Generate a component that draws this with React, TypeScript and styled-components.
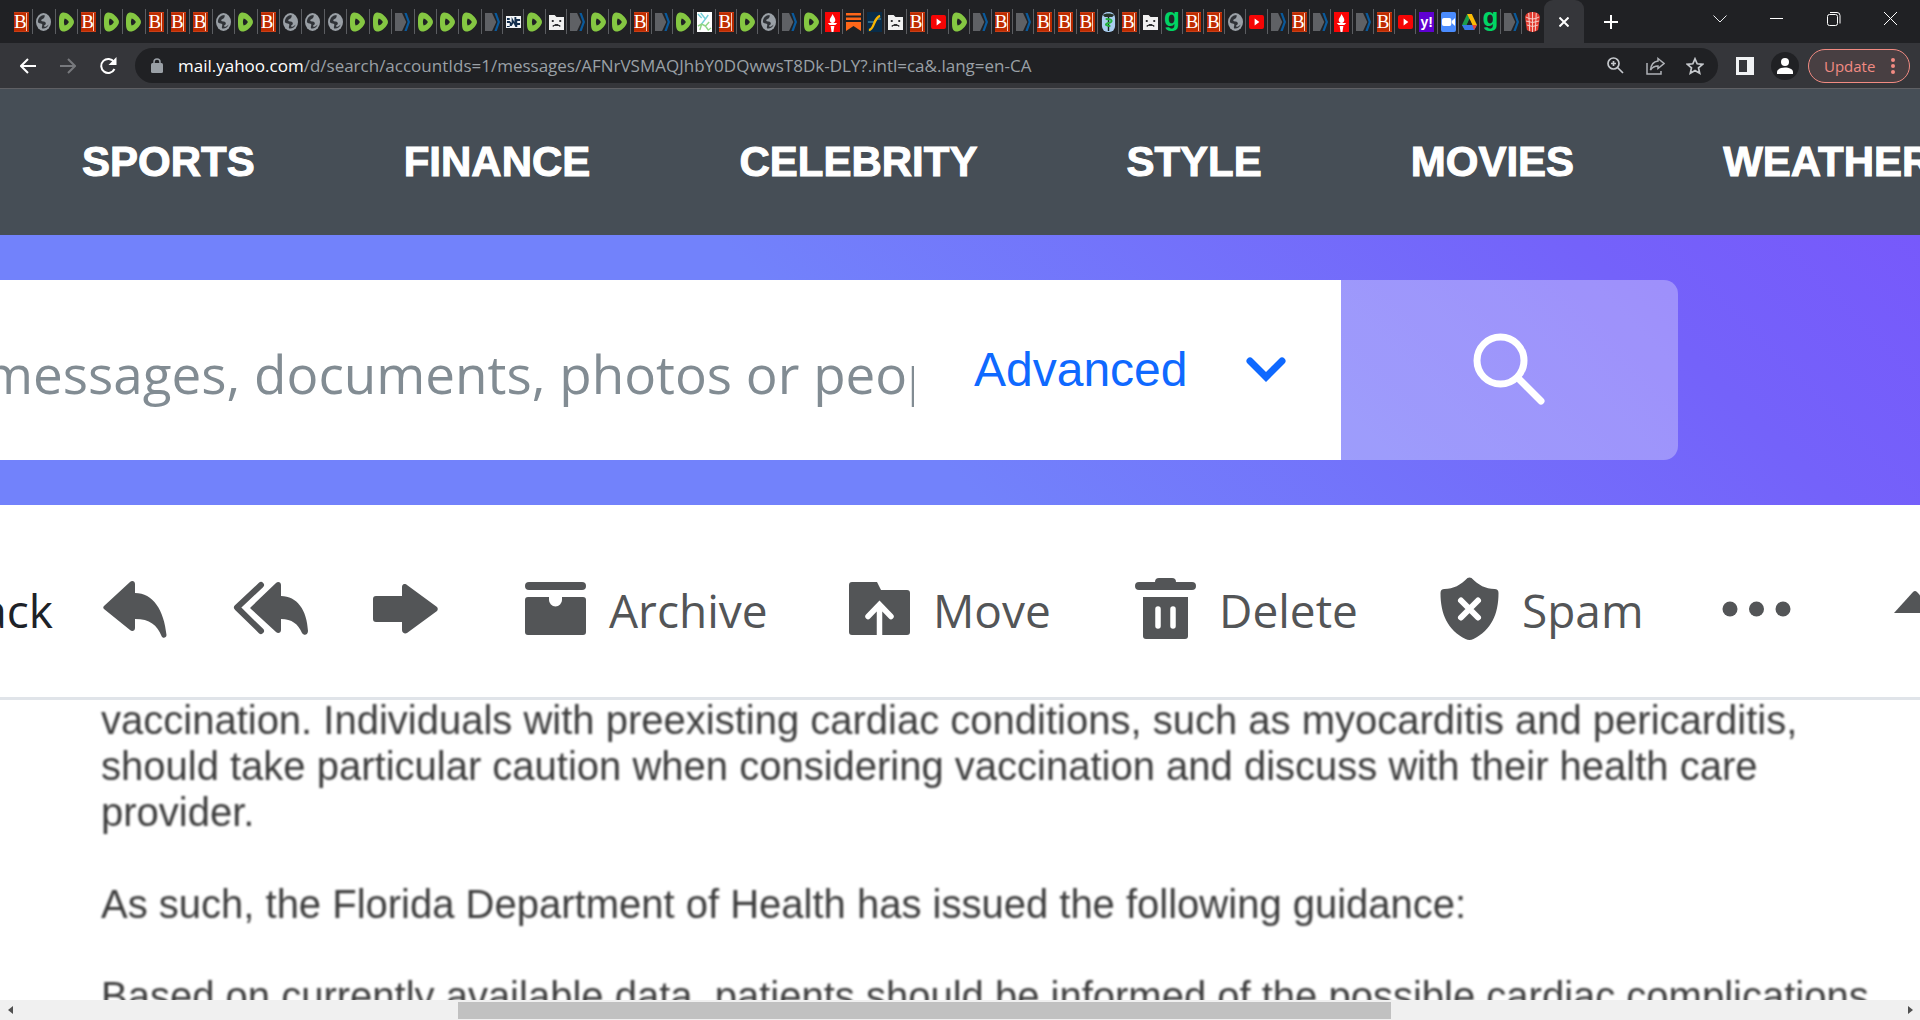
import React from "react";
import styled, { createGlobalStyle, css } from "styled-components";

const GlobalStyle = createGlobalStyle`
  * { box-sizing: border-box; }
  html, body, #root { height: 100%; }
  body { margin: 0; overflow: hidden; background: #fff; }
  button { border: 0; padding: 0; margin: 0; background: none; font: inherit; color: inherit; cursor: pointer; }
  svg { display: block; flex: none; }
  a { color: inherit; text-decoration: none; }
`;

const uiFont = `"Open Sans", "Noto Sans", sans-serif`;
const pageFont = `"Liberation Sans", Arial, sans-serif`;

const Window = styled.div`
  display: flex;
  flex-direction: column;
  height: 100vh;
  overflow: hidden;
  font-family: ${uiFont};
`;

/* ---------- tab strip ---------- */

const TabStrip = styled.div`
  display: flex;
  flex: none;
  height: 43px;
  padding-left: 11px;
  background: #202124;
`;

const TabGroup = styled.div<{ $width: number }>`
  display: flex;
  flex: 0 1 ${(p) => p.$width}px;
  min-width: 0;
`;

const Tab = styled.button<{ $last: boolean }>`
  display: flex;
  align-items: center;
  flex: 1 1 0;
  min-width: 0;
  height: 25px;
  margin-top: 9px;
  padding-left: 3px;
  border-right: 1px solid ${(p) => (p.$last ? "transparent" : "#5b5d61")};
`;

const LetterIcon = styled.span<{ $bg: string; $fg: string; $serif?: boolean; $size: number; $lift?: number }>`
  display: flex;
  align-items: center;
  justify-content: center;
  flex: none;
  width: 15px;
  height: 20px;
  padding-bottom: ${(p) => p.$lift ?? 0}px;
  background: ${(p) => p.$bg};
  color: ${(p) => p.$fg};
  font-family: ${(p) => (p.$serif ? `"Liberation Serif", serif` : pageFont)};
  font-size: ${(p) => p.$size}px;
  font-weight: 700;
  line-height: 20px;
  ${(p) =>
    p.$serif &&
    css`
      border: solid #c93f18;
      border-width: 1px 0;
      box-shadow: inset -2px 0 #b92a00, inset -3px 0 #f3c9bd;
      justify-content: flex-start;
      font-weight: 400;
    `}
`;

const ActiveTab = styled.div`
  display: flex;
  align-items: center;
  justify-content: center;
  flex: none;
  width: 40px;
  height: 43px;
  border-radius: 9px 9px 0 0;
  background: #35363a;
`;

const NewTab = styled.button`
  display: flex;
  align-items: center;
  justify-content: center;
  width: 54px;
`;

const WindowControls = styled.div`
  display: flex;
  flex: none;
  margin-left: auto;
  padding-right: 1px;
`;

const WindowButton = styled.button`
  display: flex;
  align-items: center;
  justify-content: center;
  width: 57px;
  height: 37px;
`;

/* ---------- address bar ---------- */

const BrowserBar = styled.div`
  display: flex;
  align-items: center;
  flex: none;
  height: 46px;
  padding: 0 10px 0 8px;
  border-bottom: 1px solid #5f6064;
  background: #35363a;
`;

const NavButton = styled.button`
  display: flex;
  align-items: center;
  justify-content: center;
  flex: none;
  width: 40px;
  height: 36px;
`;

const Omnibox = styled.div`
  display: flex;
  align-items: center;
  flex: 1;
  min-width: 0;
  height: 35px;
  margin-left: 7px;
  padding: 0 13px 0 16px;
  border-radius: 18px;
  background: #202124;
`;

const Url = styled.div`
  flex: 1;
  min-width: 0;
  margin-left: 15px;
  overflow: hidden;
  color: #9aa0a6;
  font-size: 17px;
  line-height: 24px;
  white-space: nowrap;
  & > strong { color: #fff; font-weight: 400; }
`;

const OmniActions = styled.div`
  display: flex;
  gap: 20px;
`;

const BarIcon = styled.button`
  display: flex;
  align-items: center;
  justify-content: center;
  flex: none;
  width: 20px;
  height: 20px;
`;

const SidePanel = styled(BarIcon)`
  margin-left: 17px;
`;

const Avatar = styled.button`
  display: flex;
  align-items: center;
  justify-content: center;
  flex: none;
  width: 28px;
  height: 28px;
  margin: 0 9px 0 16px;
  border-radius: 50%;
  background: #202124;
`;

const Update = styled.button`
  display: flex;
  align-items: center;
  justify-content: space-between;
  flex: none;
  width: 102px;
  height: 34px;
  padding: 0 14px 0 15px;
  border: 1px solid #f28b82;
  border-radius: 17px;
  background: #483f42;
  color: #f28b82;
  font-size: 15px;
  line-height: 20px;
`;

/* ---------- portal navigation ---------- */

const PortalNav = styled.nav`
  display: flex;
  align-items: center;
  flex: none;
  gap: 149px;
  height: 146px;
  padding-left: 82px;
  overflow: hidden;
  background: #464e56;
  color: #fff;
  font-family: ${pageFont};
  font-size: 42px;
  font-weight: 700;
  line-height: 46px;
  -webkit-text-stroke: 1px #fff;
`;

/* ---------- search ---------- */

const SearchBand = styled.div`
  flex: none;
  padding: 45px 242px 45px 0;
  background: linear-gradient(45deg, #7282fb 45%, #7462fa 84%, #7759fb 100%);
`;

const SearchForm = styled.form`
  display: flex;
  height: 180px;
  border-radius: 0 14px 14px 0;
  overflow: hidden;
`;

const SearchBox = styled.div`
  display: flex;
  align-items: center;
  flex: 1;
  min-width: 0;
  background: #fff;
`;

const SearchInput = styled.input`
  flex: 1;
  min-width: 0;
  height: 80px;
  margin: 8px 0 0 -16px;
  padding: 0;
  border: 0;
  outline: 0;
  background: none;
  color: #1d2228;
  font-family: ${uiFont};
  font-size: 53px;
  line-height: 80px;
  &::placeholder { color: #828c93; opacity: 1; }
`;

const Advanced = styled.button`
  display: flex;
  align-items: center;
  flex: none;
  gap: 58px;
  width: 367px;
  margin-left: 60px;
  color: #0f69ff;
  font-family: ${pageFont};
  font-size: 48px;
  line-height: 56px;
`;

const SearchButton = styled.button`
  display: flex;
  align-items: center;
  justify-content: center;
  flex: none;
  width: 337px;
  padding: 0 2px 2px 0;
  background: rgba(255, 255, 255, 0.3);
`;

/* ---------- message toolbar ---------- */

const MailToolbar = styled.div`
  display: flex;
  align-items: center;
  flex: none;
  height: 195px;
  padding-top: 16px;
  overflow: hidden;
  border-bottom: 3px solid #e0e4e9;
  background: #fff;
  color: #535557;
  font-size: 46px;
  line-height: 64px;
`;

const Back = styled.button`
  display: flex;
  justify-content: flex-end;
  flex: none;
  width: 53px;
  color: #1d2228;
`;

const ToolLabel = styled.span`
  padding-top: 2px;
`;

const ToolButton = styled.button<{ $width: number; $before?: number }>`
  display: flex;
  align-items: center;
  flex: none;
  gap: 23px;
  width: ${(p) => p.$width}px;
  margin-left: ${(p) => p.$before ?? 0}px;
`;

/* ---------- message ---------- */

const Article = styled.main`
  flex: 1;
  min-height: 0;
  overflow: hidden;
`;

/* The message is scrolled, so its first line sits tight under the toolbar. */
const ArticleBody = styled.div`
  margin-top: -3px;
  padding: 0 40px 0 101px;
  color: #3c3c3c;
  font-family: ${pageFont};
  font-size: 40px;
  line-height: 46px;
  filter: blur(1px);
`;

const Paragraph = styled.p`
  margin: 0 0 46px;
  white-space: nowrap;
`;

/* ---------- scroll bar ---------- */

const ScrollBar = styled.div`
  display: flex;
  flex: none;
  height: 20px;
  background: #f0f0f0;
`;

const ScrollArrow = styled.button`
  display: flex;
  align-items: center;
  justify-content: center;
  flex: none;
  width: 20px;
  height: 20px;
`;

const ScrollTrack = styled.div`
  flex: 1;
  padding: 2px 0 1px;
`;

const ScrollThumb = styled.div`
  width: 49.6%;
  height: 17px;
  margin-left: 23.3%;
  background: #c1c1c1;
`;

/* ---------- favicons ---------- */

const Fav = ({ children }: { children: React.ReactNode }) => (
  <svg width="15" height="20" viewBox="0 0 16 20" preserveAspectRatio="none" aria-hidden="true">
    {children}
  </svg>
);

const favicons: Record<string, { title: string; icon: React.ReactNode }> = {
  B: { title: "News", icon: <LetterIcon $bg="#bf2c00" $fg="#fff" $serif $size={19}>B</LetterIcon> },
  o: {
    title: "Page",
    icon: (
      <Fav>
        <ellipse cx="8" cy="10" rx="8" ry="9" fill="#9aa0a6" />
        <path d="M9 3C10 5 8 7 6 7.500c-1 1 0 2 1.500 2s3 .5 3 2-2 1.500-2 2.500 2 1.500 5-1.500c-1 3-4 4.500-7 4-1-2 1-3 0-4.500-2-1-4-.5-4.500-2C2 6 5 3 9 3z" fill="#303338" />
      </Fav>
    ),
  },
  D: {
    title: "Video",
    icon: (
      <Fav>
        <path d="M4 0.500C8 0 12 3 14.500 6.500c2 2.500 2 4.500 0 7C12 17 8 20 4 19.500 0 19 0 14 0 10S0 1 4 .500z" fill="#85c742" />
        <path d="M6 6.500c2 .5 4 2 4.500 3.500-.5 1.500-2.500 3-4.500 3.500-1-2-1-5 0-7z" fill="#202124" />
      </Fav>
    ),
  },
  ">": {
    title: "Document",
    icon: (
      <Fav>
        <path d="M0 1h7.500L12 10l-4.500 9H0z" fill="#5f6165" />
        <path d="M10 1h2.500L16 10l-3.500 9H10l3.500-9z" fill="#0a5a9c" />
      </Fav>
    ),
  },
  M: {
    title: "Journal",
    icon: (
      <Fav>
        <path d="M0 4h16v12H0z" fill="#f3f5f7" />
        <path d="M1 6h3v2H1zM6 5l3 5V5h2v2h4v2h-3v2h3v2h-3v2h-2l-2-4-2 3H4v-3H1V9h3l2 2zM1 14h3v1H1z" fill="#16304e" />
      </Fav>
    ),
  },
  s: {
    title: "Unavailable",
    icon: (
      <Fav>
        <path d="M0 3h6l2 2h8v13H0z" fill="#f1f1f1" />
        <path d="M3 8h2v2H3zM11 8h2v2h-2zM4 15v-2h2v-1h4v1h2v2h-1v-1H5v1z" fill="#303134" />
      </Fav>
    ),
  },
  n: {
    title: "Network",
    icon: (
      <Fav>
        <path d="M0 0h16v20H0z" fill="#fff" />
        <path d="M1 2l4 4M4 1l5 6-5 6M9 7l3-4" stroke="#75cfd8" fill="none" strokeWidth="1.500" />
        <path d="M1 14l4-2 4 2 4-4M3 18l2-6M9 14l3 4 3-2" stroke="#8fd685" fill="none" strokeWidth="1.500" />
      </Fav>
    ),
  },
  t: {
    title: "Torch",
    icon: (
      <Fav>
        <path d="M0 0h16v20H0z" fill="#fa0505" />
        <path d="M8 2c1 2 3 4 3 6 0 1-1 3-3 3s-3-2-3-3c0-2 2-3 3-6zM3 11h10l-2 2H5zM6 14h4l-1 6H7z" fill="#fff" />
      </Fav>
    ),
  },
  k: {
    title: "Newsletter",
    icon: (
      <Fav>
        <path d="M0 1h16v2.500H0zM0 5.500h16V8H0zM0 10h16v9l-8-5-8 5z" fill="#ff6719" />
      </Fav>
    ),
  },
  f: {
    title: "Feed",
    icon: (
      <Fav>
        <path d="M0 0h16v20H0z" fill="#082c49" />
        <path d="M1 10h7l3-3h4" stroke="#3a7d9d" strokeWidth="1.500" fill="none" />
        <path d="M2 18c6 0 5-13 12-14" stroke="#f7b500" strokeWidth="2.500" fill="none" />
      </Fav>
    ),
  },
  y: {
    title: "Player",
    icon: (
      <Fav>
        <rect y="3" width="16" height="14" rx="2" fill="#f50505" />
        <path d="M6 6.500l5 3.500-5 3.500z" fill="#fff" />
      </Fav>
    ),
  },
  c: {
    title: "Medical",
    icon: (
      <Fav>
        <rect x="1" width="14" height="20" rx="6" fill="#a9cdf0" />
        <path d="M8 3v16" stroke="#17251c" strokeWidth="1.500" />
        <path d="M2 3c2-2 10-2 12 0l-2 2H4z" fill="#26342b" />
        <path d="M5 7c8 0 8 3 3 4s-3 3 2 3" stroke="#22b33c" strokeWidth="1.800" fill="none" />
      </Fav>
    ),
  },
  g: { title: "Social", icon: <LetterIcon $bg="transparent" $fg="#00d565" $size={26} $lift={10}>g</LetterIcon> },
  Y: { title: "Mail", icon: <LetterIcon $bg="#5f01d1" $fg="#fff" $size={14}>y!</LetterIcon> },
  z: {
    title: "Meeting",
    icon: (
      <Fav>
        <rect width="16" height="20" rx="2" fill="#4a8cff" />
        <rect x="1" y="6" width="10" height="8" rx="2" fill="#fff" />
        <path d="M11.500 9L15 6v8l-3.500-3z" fill="#fff" />
      </Fav>
    ),
  },
  d: {
    title: "Drive",
    icon: (
      <Fav>
        <path d="M5.500 2h5L8 7 3 18 0 13z" fill="#1b9e4b" />
        <path d="M5.500 2h5L16 13h-5z" fill="#fbbc05" />
        <path d="M0 13h16l-3 5H3z" fill="#3879ea" />
        <path d="M8 7l3 6H5z" fill="#202124" />
        <path d="M11 13h5l-3 5z" fill="#ea4335" />
      </Fav>
    ),
  },
  r: {
    title: "Archive",
    icon: (
      <Fav>
        <path d="M0 5Q1 0 8 0t8 5l-2 13q-6 4-12 0z" fill="#e33b30" />
        <path d="M1 5q7 4 14 0M1 9q7 3 14 0M2 13q6 3 12 0M4 1l1 18M8 0v20M12 1l-1 18" stroke="#f7cfc9" strokeWidth="1" fill="none" />
      </Fav>
    ),
  },
};

const firstTabs = "BoDBDDBBBoDBoooDD>DDD";
const laterTabs = ">MDs>DDB>DnBDo>DtkfsByD>B>BBBcBsgBBoy>B>t>ByYzdg>r";

const renderTabs = (codes: string, endless: boolean) =>
  codes.split("").map((code, i) => (
    <Tab key={i} $last={endless && i === codes.length - 1} aria-label={favicons[code].title}>
      {favicons[code].icon}
    </Tab>
  ));

/* ---------- mail icons ---------- */

const ReplyIcon = () => (
  <svg width="64" height="58" viewBox="0 0 64 58" fill="currentColor">
    <path d="M1 26L27 2c2-2 5-1 5 2v9c18 0 29 17 31.500 42 0 3-4 4-5 1C54 45 47 39 32 39v9c0 3-3 4-5 2L1 29c-1-1-1-2 0-3z" />
  </svg>
);

const ReplyAllIcon = () => (
  <svg width="75" height="58" viewBox="0 0 75 58" fill="currentColor">
    <path d="M28 5L4 27.500 28 51" fill="none" stroke="currentColor" strokeWidth="6" strokeLinecap="round" strokeLinejoin="round" />
    <path d="M18 27L43 3c2-2 5-1 5 2v11c16 0 26 14 27 35 0 4-4 5-6 2-4-9-10-14-21-14v11c0 3-3 4-5 2L18 29c-1-1-1-1 0-2z" />
  </svg>
);

const ForwardIcon = () => (
  <svg width="65" height="50" viewBox="0 0 65 50" fill="currentColor">
    <path d="M3 12h26V3c0-3 3-4 5-2l30 22c1 1 1 3 0 4L34 49c-2 1-5 0-5-3v-8H3c-2 0-3-1-3-3V15c0-2 1-3 3-3z" />
  </svg>
);

const ArchiveIcon = () => (
  <svg width="61" height="54" viewBox="0 0 61 54" fill="currentColor">
    <rect width="61" height="8" rx="4" />
    <path d="M3 15h21v3a6.500 6.500 0 0 0 13 0v-3h21q3 0 3 3v32q0 3-3 3H3q-3 0-3-3V18q0-3 3-3z" />
  </svg>
);

const MoveIcon = () => (
  <svg width="61" height="54" viewBox="0 0 61 54" fill="currentColor">
    <path d="M3 0h25l4 8h26q3 0 3 3v39q0 3-3 3H3q-3 0-3-3V3q0-3 3-3z" />
    <path d="M30.500 54V25M19 34.500l11.500-12 11.500 12" fill="none" stroke="#fff" strokeWidth="5.500" strokeLinecap="round" />
  </svg>
);

const DeleteIcon = () => (
  <svg width="61" height="62" viewBox="0 0 61 62" fill="currentColor">
    <path d="M4 4h16q0-4 4-4h13q4 0 4 4h16q4 0 4 4t-4 4H4q-4 0-4-4t4-4z" />
    <path d="M8 19h45v39q0 3-3 3H11q-3 0-3-3z" />
    <path d="M23 31v17M38 31v17" stroke="#fff" strokeWidth="5.500" strokeLinecap="round" />
  </svg>
);

const SpamIcon = () => (
  <svg width="59" height="64" viewBox="0 0 58 64" fill="currentColor">
    <path d="M27 1q2-1 4 0c7 7 14 11 23 11q4 0 4 4c0 21-7 37-25 46q-4 2-8 0C7 53 0 37 0 16q0-4 4-4C13 12 20 8 27 1z" />
    <path d="M20.500 23.500l17 17M37.500 23.500l-17 17" stroke="#fff" strokeWidth="6" strokeLinecap="round" />
  </svg>
);

const MoreIcon = () => (
  <svg width="69" height="16" viewBox="0 0 69 16" fill="currentColor">
    <circle cx="8" cy="8" r="7.500" />
    <circle cx="34.500" cy="8" r="7.500" />
    <circle cx="61" cy="8" r="7.500" />
  </svg>
);

const UpIcon = () => (
  <svg width="42" height="38" viewBox="0 0 42 38" fill="currentColor">
    <path d="M0 23L19 2q2-2 4 0l19 21z" />
  </svg>
);

const portalLinks = ["SPORTS", "FINANCE", "CELEBRITY", "STYLE", "MOVIES", "WEATHER"];

export default function App() {
  return (
    <Window>
      <GlobalStyle />
      <TabStrip>
        <TabGroup $width={471}>{renderTabs(firstTabs, false)}</TabGroup>
        <TabGroup $width={1062}>{renderTabs(laterTabs, true)}</TabGroup>
        <ActiveTab>
          <button aria-label="Close tab">
            <svg width="10" height="10" viewBox="0 0 10 10" stroke="#fff" strokeWidth="2">
              <path d="M.5.500l9 9M9.500.500l-9 9" />
            </svg>
          </button>
        </ActiveTab>
        <NewTab aria-label="New tab">
          <svg width="14" height="14" viewBox="0 0 14 14" stroke="#fff" strokeWidth="2">
            <path d="M7 0v14M0 7h14" />
          </svg>
        </NewTab>
        <WindowControls>
          <WindowButton aria-label="Search tabs">
            <svg width="14" height="8" viewBox="0 0 14 8" fill="none" stroke="#e8eaed"><path d="M.5.500l6.500 6.500 6.500-6.500" /></svg>
          </WindowButton>
          <WindowButton aria-label="Minimize">
            <svg width="13" height="1" viewBox="0 0 13 1"><path d="M0 0h13v1H0z" fill="#fff" /></svg>
          </WindowButton>
          <WindowButton aria-label="Restore">
            <svg width="14" height="14" viewBox="0 0 14 14" fill="none" stroke="#fff">
              <rect x=".5" y="2.500" width="10" height="11" rx="2" />
              <path d="M3 .5h7q3 0 3 3v8" />
            </svg>
          </WindowButton>
          <WindowButton aria-label="Close">
            <svg width="13" height="13" viewBox="0 0 13 13" stroke="#fff"><path d="M0 0l13 13M13 0L0 13" /></svg>
          </WindowButton>
        </WindowControls>
      </TabStrip>

      <BrowserBar>
        <NavButton aria-label="Back">
          <svg width="16" height="16" viewBox="0 0 16 16" fill="none" stroke="#fff" strokeWidth="2"><path d="M16 8H1.500M8 1L1 8l7 7" /></svg>
        </NavButton>
        <NavButton aria-label="Forward">
          <svg width="16" height="16" viewBox="0 0 16 16" fill="none" stroke="#77797d" strokeWidth="2"><path d="M0 8h14.500M8 1l7 7-7 7" /></svg>
        </NavButton>
        <NavButton aria-label="Reload">
          <svg width="18" height="18" viewBox="0 0 18 18" fill="none" stroke="#fff" strokeWidth="2">
            <path d="M15 5A7 7 0 1 0 15.500 12" />
            <path d="M17.500 0v8h-8z" fill="#fff" stroke="none" />
          </svg>
        </NavButton>
        <Omnibox>
          <svg width="12" height="15" viewBox="0 0 12 15">
            <path d="M3 6V4a3 3 0 0 1 6 0v2" fill="none" stroke="#9aa0a6" strokeWidth="1.500" />
            <rect y="5" width="12" height="10" rx="1.500" fill="#9aa0a6" />
          </svg>
          <Url><strong>mail.yahoo.com</strong>/d/search/accountIds=1/messages/AFNrVSMAQJhbY0DQwwsT8Dk-DLY?.intl=ca&amp;.lang=en-CA</Url>
          <OmniActions>
            <BarIcon aria-label="Zoom">
              <svg width="17" height="17" viewBox="0 0 17 17" fill="none" stroke="#c5c8cc" strokeWidth="1.700">
                <circle cx="6.500" cy="6.500" r="5.500" /><path d="M10.500 10.500l5.500 5.500M6.500 4v5M4 6.500h5" />
              </svg>
            </BarIcon>
            <BarIcon aria-label="Share">
              <svg width="19" height="18" viewBox="0 0 19 18" fill="none" stroke="#aeb1b6" strokeWidth="1.500">
                <path d="M1 6v11h14v-3M12 1.500l6 5-6 5V9c-3 0-5.500 1-7.500 4C5 8 8 4.500 12 4z" />
              </svg>
            </BarIcon>
            <BarIcon aria-label="Bookmark">
              <svg width="18" height="18" viewBox="0 0 18 18" fill="none" stroke="#c5c8cc" strokeWidth="1.700">
                <path d="M9 1.800l2.200 5 5.400.5-4.100 3.600 1.200 5.300L9 13.400l-4.700 2.800 1.200-5.300-4.100-3.600 5.400-.5z" />
              </svg>
            </BarIcon>
          </OmniActions>
        </Omnibox>
        <SidePanel aria-label="Side panel">
          <svg width="18" height="18" viewBox="0 0 18 18"><path d="M0 0h18v18H0z" fill="#f1f3f4" /><path d="M3 3h8v12H3z" fill="#35363a" /></svg>
        </SidePanel>
        <Avatar aria-label="Profile">
          <svg width="16" height="16" viewBox="0 0 16 16" fill="#fff"><circle cx="8" cy="4" r="4" /><path d="M0 16v-2c0-6 16-6 16 0v2z" /></svg>
        </Avatar>
        <Update>
          Update
          <svg width="4" height="16" viewBox="0 0 4 16" fill="#f28b82"><circle cx="2" cy="2" r="2" /><circle cx="2" cy="8" r="2" /><circle cx="2" cy="14" r="2" /></svg>
        </Update>
      </BrowserBar>

      <PortalNav>
        {portalLinks.map((label) => (
          <a key={label} href={`#${label.toLowerCase()}`}>{label}</a>
        ))}
      </PortalNav>

      <SearchBand>
        <SearchForm onSubmit={(e) => e.preventDefault()}>
          <SearchBox>
            <SearchInput type="text" aria-label="Search mail" placeholder="messages, documents, photos or people" />
            <Advanced type="button">
              Advanced
              <svg width="40" height="26" viewBox="0 0 40 26" fill="none" stroke="currentColor" strokeWidth="7" strokeLinecap="round">
                <path d="M4 4l16 16L36 4" />
              </svg>
            </Advanced>
          </SearchBox>
          <SearchButton aria-label="Search">
            <svg width="72" height="72" viewBox="0 0 72 72" fill="none" stroke="#fff" strokeWidth="7" strokeLinecap="round">
              <circle cx="27.500" cy="27.500" r="23.500" />
              <path d="M45 45l23 23" />
            </svg>
          </SearchButton>
        </SearchForm>
      </SearchBand>

      <MailToolbar>
        <Back><ToolLabel>ack</ToolLabel></Back>
        <ToolButton $width={64} $before={50} aria-label="Reply"><ReplyIcon /></ToolButton>
        <ToolButton $width={75} $before={66} aria-label="Reply all"><ReplyAllIcon /></ToolButton>
        <ToolButton $width={65} $before={65} aria-label="Forward"><ForwardIcon /></ToolButton>
        <ToolButton $width={324} $before={87}><ArchiveIcon /><ToolLabel>Archive</ToolLabel></ToolButton>
        <ToolButton $width={286}><MoveIcon /><ToolLabel>Move</ToolLabel></ToolButton>
        <ToolButton $width={305}><DeleteIcon /><ToolLabel>Delete</ToolLabel></ToolButton>
        <ToolButton $width={282}><SpamIcon /><ToolLabel>Spam</ToolLabel></ToolButton>
        <ToolButton $width={69} aria-label="More"><MoreIcon /></ToolButton>
        <ToolButton $width={42} $before={103} aria-label="Previous message"><UpIcon /></ToolButton>
      </MailToolbar>

      <Article>
        <ArticleBody>
          <Paragraph>
            vaccination. Individuals with preexisting cardiac conditions, such as myocarditis and pericarditis,<br />
            should take particular caution when considering vaccination and discuss with their health care<br />
            provider.
          </Paragraph>
          <Paragraph>As such, the Florida Department of Health has issued the following guidance:</Paragraph>
          <Paragraph>Based on currently available data, patients should be informed of the possible cardiac complications</Paragraph>
        </ArticleBody>
      </Article>

      <ScrollBar>
        <ScrollArrow aria-label="Scroll left">
          <svg width="5" height="8" viewBox="0 0 5 8"><path d="M5 0v8L0 4z" fill="#505050" /></svg>
        </ScrollArrow>
        <ScrollTrack><ScrollThumb /></ScrollTrack>
        <ScrollArrow aria-label="Scroll right">
          <svg width="5" height="8" viewBox="0 0 5 8"><path d="M0 0v8l5-4z" fill="#505050" /></svg>
        </ScrollArrow>
      </ScrollBar>
    </Window>
  );
}
